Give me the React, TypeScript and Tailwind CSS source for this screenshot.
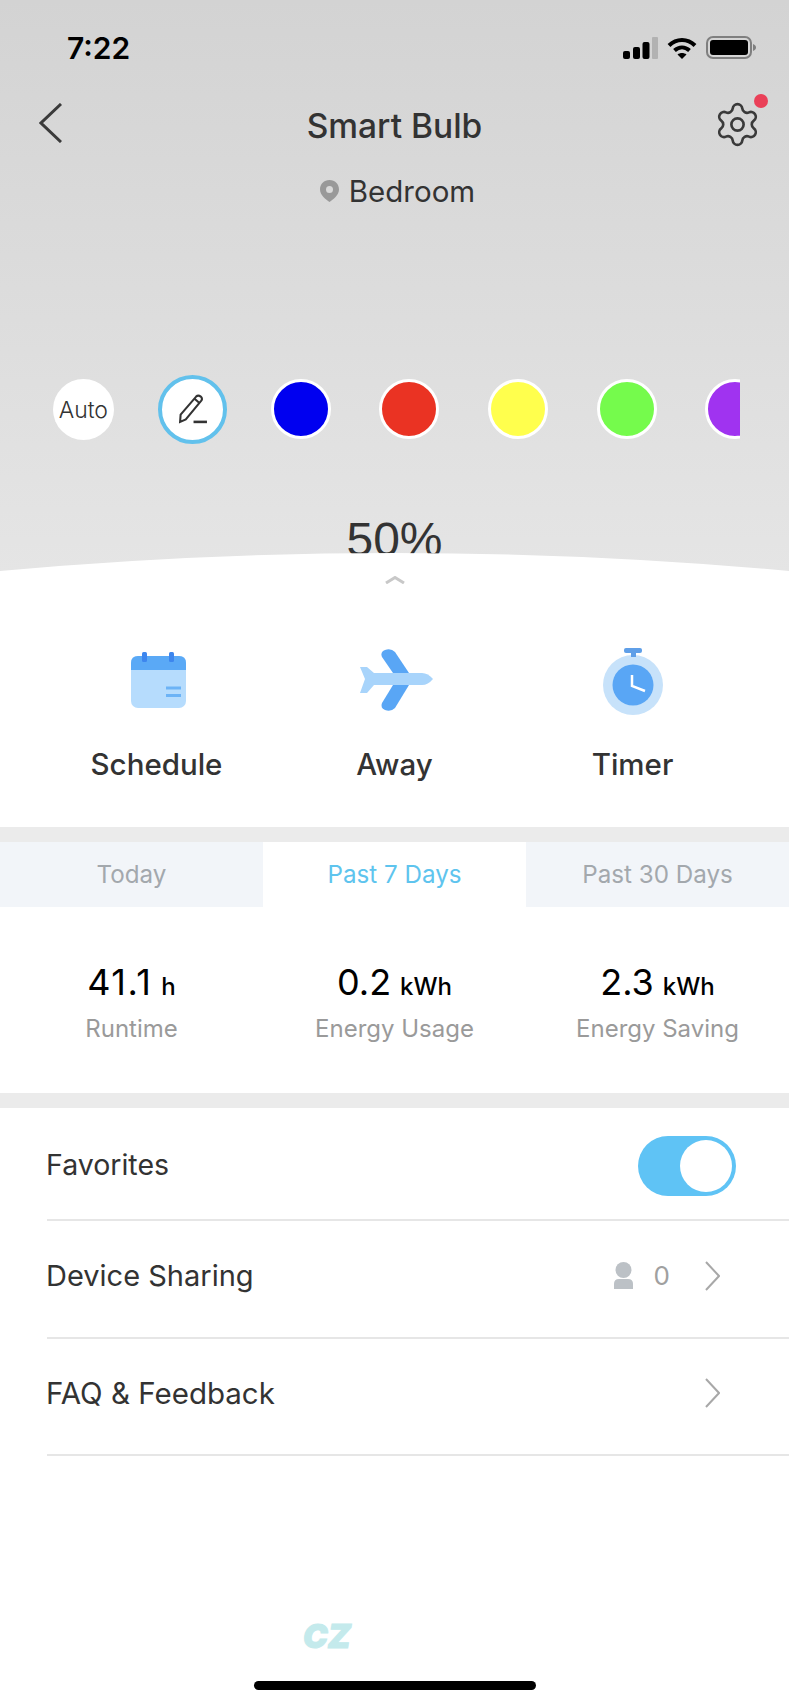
import { Settings } from "lucide-react";

const swatches = ["bg-[#0000f0]", "bg-[#ea3323]", "bg-[#ffff4d]", "bg-[#75fb4c]", "bg-[#a033f0]"];

const actions = [
  { label: "Schedule", icon: <CalendarIcon />, iconClass: "ml-[4px]" },
  { label: "Away", icon: <PlaneIcon />, iconClass: "ml-[4px]" },
  { label: "Timer", icon: <TimerIcon />, iconClass: "pt-[2px]" },
];

const stats = [
  { value: "41.1", unit: "h", label: "Runtime", valueClass: "tracking-[1.5px]" },
  { value: "0.2", unit: "kWh", label: "Energy Usage", valueClass: "" },
  { value: "2.3", unit: "kWh", label: "Energy Saving", valueClass: "" },
];

function StatusIcons() {
  return (
    <div className="flex items-center gap-[9px]">
      <svg width="35" height="22" viewBox="0 0 35 22">
        <rect x="0" y="14" width="7" height="8" rx="2" fill="#000" />
        <rect x="10" y="10" width="7" height="12" rx="2" fill="#000" />
        <rect x="19.500" y="5" width="7" height="17" rx="2" fill="#000" />
        <rect x="29" y="0" width="6" height="22" rx="1" fill="#b2b2b2" />
      </svg>
      <svg width="30" height="22" viewBox="0 0 30 22" fill="none" stroke="#000" strokeWidth="4">
        <path d="M2 8.500 C9.500 1 20.500 1 28 8.500" />
        <path d="M7.500 13.500 C12 9.500 18 9.500 22.500 13.500" />
        <path d="M15 22 L10.500 17.500 C13 15.500 17 15.500 19.500 17.500 Z" fill="#000" stroke="none" />
      </svg>
      <svg width="50" height="24" viewBox="0 0 50 24">
        <rect x="1" y="1" width="44" height="21" rx="6" fill="none" stroke="#7f7f7f" strokeWidth="2" />
        <rect x="4" y="4" width="38" height="15" rx="3" fill="#000" />
        <path d="M47 8 C49 9 50 10 50 11.500 C50 13 49 14 47 15 Z" fill="#7f7f7f" />
      </svg>
    </div>
  );
}

function CalendarIcon() {
  return (
    <svg width="55" height="56" viewBox="0 0 55 56">
      <rect x="0" y="4" width="55" height="52" rx="7" fill="#b6dcfd" />
      <path d="M0 18 V11 Q0 4 7 4 H48 Q55 4 55 11 V18 Z" fill="#5aa9f6" />
      <rect x="11" y="0" width="5" height="10" rx="1.500" fill="#3d86ee" />
      <rect x="38" y="0" width="5" height="10" rx="1.500" fill="#3d86ee" />
      <rect x="35" y="34.500" width="15" height="3" fill="#6cb3f6" />
      <rect x="35" y="42" width="15" height="3" fill="#6cb3f6" />
    </svg>
  );
}

function PlaneIcon() {
  return (
    <svg width="73" height="63" viewBox="0 0 73 63">
      <path d="M22 8 Q20 3 25 1 Q31 -1 35 3 L49 24 H33 Z" fill="#59a6f5" />
      <path d="M22 54 Q20 59 25 61 Q31 63 35 59 L49 36 H33 Z" fill="#59a6f5" />
      <path d="M13 24 H62 Q68 24 73 30 Q68 36 62 36 H13 Z" fill="#a8d4fb" />
      <path d="M0 18 H7 L14 24 V36 L7 44 H0 L5 30 Z" fill="#a8d4fb" />
    </svg>
  );
}

function TimerIcon() {
  return (
    <svg width="60" height="67" viewBox="0 0 60 67">
      <circle cx="30" cy="37" r="30" fill="#c7e2fa" />
      <rect x="21" y="0" width="18" height="5" rx="2" fill="#5f9fe8" />
      <rect x="28" y="4" width="5" height="5" fill="#5f9fe8" />
      <circle cx="30" cy="37" r="20.500" fill="#59a6f5" />
      <path d="M29 27 V38 L42 43" fill="none" stroke="#fff" strokeWidth="2.500" />
    </svg>
  );
}

function RowChevron() {
  return (
    <svg width="15" height="30" viewBox="0 0 15 30" fill="none" stroke="#a8a8a8" strokeWidth="2">
      <path d="M1 1 L14 15 L1 29" />
    </svg>
  );
}

export default function App() {
  return (
    <div className="w-[789px] h-[1707px] bg-white flex flex-col overflow-hidden font-['Inter',sans-serif] text-[#333]">
      <div className="relative h-[571px] shrink-0 overflow-hidden bg-linear-to-b from-[#d3d3d3] to-[#e5e5e5]">
        <div className="flex items-center justify-between pt-[35px] pl-[67px] pr-[33px] h-[60px]">
          <span className="text-[30px] leading-[24px] font-semibold text-black">7:22</span>
          <StatusIcons />
        </div>

        <div className="flex items-center justify-between h-[50px] mt-[38px] pl-[39px] pr-[31px]">
          <svg width="23" height="40" viewBox="0 0 23 40" fill="none" stroke="#3a3a3a" strokeWidth="3">
            <path d="M22 1 L2 20 L22 39" />
          </svg>
          <h1 className="text-[33.500px] font-medium leading-[50px] ml-[10px] mt-[5px]">Smart Bulb</h1>
          <div className="relative w-[41px] h-[41px] mt-[3px] flex items-center justify-center">
            <Settings size={49} strokeWidth={1.3} color="#3a3a3a" className="shrink-0" />
            <span className="absolute right-[-10px] top-[-10px] w-[14px] h-[14px] rounded-full bg-[#ea4058]" />
          </div>
        </div>

        <div className="flex items-center justify-center gap-[10px] h-[40px] mt-[23px] pl-[6px]">
          <svg width="19" height="22" viewBox="0 0 19 22">
            <path
              fillRule="evenodd"
              d="M9.500 0 C15 0 19 4 19 9.500 C19 15 13 19.500 9.500 22 C6 19.500 0 15 0 9.500 C0 4 4 0 9.500 0 Z M9.500 6 A3.500 3.500 0 1 0 9.500 13 A3.500 3.500 0 1 0 9.500 6 Z"
              fill="#999"
            />
          </svg>
          <span className="text-[29.500px] leading-[40px]">Bedroom</span>
        </div>

        <div className="flex ml-[29px] w-[711px] h-[70px] mt-[163px] overflow-hidden">
          <div className="w-[108.700px] shrink-0 flex items-center justify-center">
            <div className="w-[61px] h-[61px] rounded-full bg-white flex items-center justify-center text-[23px] font-light pt-[2px]">Auto</div>
          </div>
          <div className="w-[108.700px] shrink-0 flex items-center justify-center">
            <div className="w-[69px] h-[69px] rounded-full bg-white border-[4px] border-[#62c1ec] flex items-center justify-center">
              <svg width="31" height="31" viewBox="0 0 30 30" fill="none" stroke="#333" strokeWidth="2">
                <path d="M3 27 L3.500 20 L18.500 2.500 Q20.500 0.500 23 2.500 Q25 4.500 23.500 6.500 L8.500 24.500 Z" />
                <path d="M17 4.500 L22 9" />
                <path d="M16 27 H29" strokeWidth="2.500" />
              </svg>
            </div>
          </div>
          {swatches.map((color) => (
            <div key={color} className="w-[108.700px] shrink-0 flex items-center justify-center">
              <div className={`w-[60px] h-[60px] rounded-full border-[3.500px] border-white ${color}`} />
            </div>
          ))}
        </div>

        <div className="text-center text-[48px] leading-[54px] mt-[69px] font-['Liberation_Sans',sans-serif]">50%</div>

        <svg className="absolute left-0 bottom-0" width="789" height="18" viewBox="0 0 789 18">
          <path d="M0 18 Q394.500 -18 789 18 Z" fill="#fff" />
        </svg>
      </div>

      <div className="flex justify-center h-[8px] mt-[5px]">
        <svg width="20" height="8" viewBox="0 0 20 8" fill="none" stroke="#c8c8c8" strokeWidth="3">
          <path d="M1 7 L10 1.500 L19 7" />
        </svg>
      </div>

      <div className="grid grid-cols-3 px-[37.500px] h-[243px] pt-[62px]">
        {actions.map((action) => (
          <div key={action.label} className="flex flex-col items-center">
            <div className={`h-[68px] flex items-center justify-center ${action.iconClass}`}>{action.icon}</div>
            <span className="text-[29.500px] leading-[40px] font-medium mt-[30px] text-[#333]">{action.label}</span>
          </div>
        ))}
      </div>

      <div className="h-[15px] bg-[#ebebeb]" />

      <div className="grid grid-cols-3 h-[65px] text-[24.200px] text-[#a3a8ad] bg-[#f2f5f9]">
        <div className="flex items-center justify-center pt-[1px]">Today</div>
        <div className="flex items-center justify-center pt-[1px] bg-white text-[#5ec4ee]">Past 7 Days</div>
        <div className="flex items-center justify-center pt-[1px]">Past 30 Days</div>
      </div>

      <div className="grid grid-cols-3 h-[186px] pt-[53px]">
        {stats.map((stat) => (
          <div key={stat.label} className="flex flex-col items-center">
            <div className="flex items-baseline gap-[9px] text-black h-[44px]">
              <span className={`text-[36px] leading-[44px] ${stat.valueClass}`}>{stat.value}</span>
              <span className="text-[24px] leading-[44px] font-medium">{stat.unit}</span>
            </div>
            <span className="text-[24px] leading-[32px] text-[#9a9a9a] mt-[9px]">{stat.label}</span>
          </div>
        ))}
      </div>

      <div className="h-[15px] bg-[#ebebeb]" />

      <div className="flex items-center justify-between h-[113px] pt-[5px] ml-[47px] pr-[53px] border-b-2 border-[#e6e6e6] text-[28.500px]">
        <span className="-ml-[1px] mb-[2px]">Favorites</span>
        <div className="w-[98px] h-[60px] rounded-full bg-[#5fc3f5] flex items-center justify-end pr-[4px]">
          <div className="w-[52px] h-[52px] rounded-full bg-white" />
        </div>
      </div>

      <div className="flex items-center justify-between h-[118px] pb-[7px] ml-[47px] pr-[69px] border-b-2 border-[#e6e6e6] text-[29px]">
        <span className="-ml-[1px]">Device Sharing</span>
        <div className="flex items-center">
          <svg width="19" height="27" viewBox="0 0 19 27" fill="#bcc1c6">
            <circle cx="9.500" cy="8" r="8" />
            <path d="M0 22 Q0 17 5 17 H14 Q19 17 19 22 V27 H0 Z" />
          </svg>
          <span className="text-[26px] text-[#a0a0a0] ml-[21px] mr-[35px]">0</span>
          <RowChevron />
        </div>
      </div>

      <div className="flex items-center justify-between h-[117px] pb-[7px] ml-[47px] pr-[69px] border-b-2 border-[#e6e6e6] text-[29.500px]">
        <span className="-ml-[1px]">FAQ &amp; Feedback</span>
        <RowChevron />
      </div>

      <div className="pl-[303px] mt-[165px] h-[30px] flex items-center">
        <span className="text-[33px] leading-[30px] font-black italic text-[#c4eaec] [-webkit-text-stroke:1px_#c4eaec]">CZ</span>
      </div>

      <div className="w-[282px] h-[9px] mx-auto mt-[30px] rounded-full bg-black" />
    </div>
  );
}
